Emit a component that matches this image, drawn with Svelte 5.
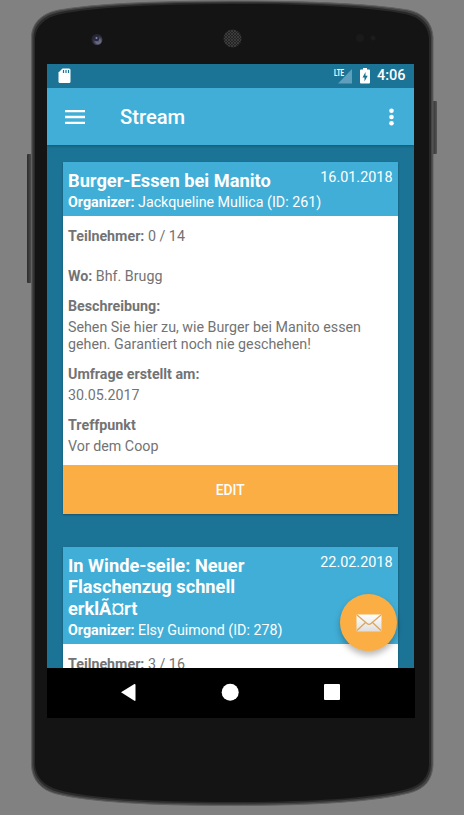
<script>
  const details = [
    { label: 'Beschreibung:', text: 'Sehen Sie hier zu, wie Burger bei Manito essen gehen. Garantiert noch nie geschehen!' },
    { label: 'Umfrage erstellt am:', text: '30.05.2017' },
    { label: 'Treffpunkt', text: 'Vor dem Coop' }
  ];
</script>

<div class="stage">
  <svg class="body" width="464" height="815" viewBox="0 0 464 815" aria-hidden="true">
    <defs>
      <linearGradient id="key" x1="0" x2="1"><stop offset="0" stop-color="#2b2b2b" /><stop offset="1" stop-color="#555" /></linearGradient>
      <pattern id="mesh" width="3" height="3" patternUnits="userSpaceOnUse">
        <rect width="3" height="3" fill="#222" />
        <circle cx="1" cy="1" r=".8" fill="#585858" />
        <circle cx="2.500" cy="2.500" r=".6" fill="#444" />
      </pattern>
      <radialGradient id="lens" cx=".6" cy=".65"><stop offset="0" stop-color="#55556f" /><stop offset=".4" stop-color="#6e6e88" /><stop offset=".7" stop-color="#42425a" /><stop offset="1" stop-color="#26262f" /></radialGradient>
    </defs>
    <rect x="27" y="154" width="5" height="129" rx="1" fill="url(#key)" />
    <rect x="432" y="101" width="5" height="53" rx="1" fill="url(#key)" />
    <path d="M31.500 765V37C32 22 43 13 59 10Q110 1 232 1T408 10C423 13 432 22 433 37V765C432 780 425 789 409 793Q360 805.500 232 805.500T57 794C41 790 32 780 31.500 765Z" fill="#444" stroke="#606060" stroke-width="1" />
    <path d="M33.500 765V37C34 24 44 15 60 12Q112 2.500 232 2.500T406 12C421 15 430 24 431 37V765C430 778 423 787 408 791Q360 803.500 232 803.500T58 792C43 788 34 778 33.500 765Z" fill="#292929" />
    <path d="M35 765V38C36 26 45 17 61 14Q112 4 232 4T405 14C420 17 428 26 429 38V765C428 777 422 785 407 789Q360 802 232 802T59 790C44 786 36 777 35 765Z" fill="#141414" />
    <circle cx="97" cy="39.500" r="5.500" fill="url(#lens)" />
    <circle cx="96.500" cy="38.500" r="2.800" fill="#292940" /><circle cx="96.500" cy="38" r="1" fill="#8a8aa8" />
    <circle cx="232.500" cy="38.500" r="9" fill="url(#mesh)" />
    <circle cx="360" cy="38" r="4" fill="#1a1a1a" /><circle cx="373" cy="38" r="2.500" fill="#1c1c1c" />
  </svg>

  <main class="screen">
    <header class="status">
      <svg class="sd" width="13" height="16" viewBox="0 0 13 16">
        <path d="M4.500.5H11Q12.500.5 12.500 2V13.500Q12.500 15 11 15H2Q.5 15 .5 13.500V4.500Z" fill="#fff" />
        <path d="M5.500 2V5M8 2V5M10.500 2V5" stroke="#1b7496" stroke-width="1.200" />
      </svg>
      <svg class="signal" width="20" height="16" viewBox="0 0 20 16">
        <path d="M5 15.500H19V1Z" fill="#5d9fbc" />
        <text x="1" y="8" textLength="10" lengthAdjust="spacingAndGlyphs" font-family="Roboto, sans-serif" font-size="9" font-weight="700" fill="#fff">LTE</text>
      </svg>
      <svg class="battery" width="10" height="16" viewBox="0 0 10 16">
        <path d="M3 0H7V1.500H9Q10 1.500 10 2.500V14.500Q10 15.500 9 15.500H1Q0 15.500 0 14.500V2.500Q0 1.500 1 1.500H3Z" fill="#fff" />
        <path d="M5.500 4L2.500 9.500H4.500V13.500L7.700 7.800H5.500Z" fill="#1b7496" />
      </svg>
      <span class="time">4:06</span>
    </header>

    <div class="bar">
      <svg width="20" height="14" viewBox="0 0 20 14"><path d="M0 1.200H20M0 7H20M0 12.800H20" stroke="#fff" stroke-width="2.300" /></svg>
      <h1>Stream</h1>
      <svg class="more" width="5" height="18" viewBox="0 0 5 18" fill="#fff"><circle cx="2.500" cy="2.700" r="2.300" /><circle cx="2.500" cy="9" r="2.300" /><circle cx="2.500" cy="15.300" r="2.300" /></svg>
    </div>

    <div class="feed">
      <article>
        <div class="head">
          <div class="row"><h2>Burger-Essen bei Manito</h2><time>16.01.2018</time></div>
          <p class="org"><b>Organizer:</b> Jackqueline Mullica (ID: 261)</p>
        </div>
        <div class="info">
          <p class="count"><b>Teilnehmer:</b> 0 / 14</p>
          <p class="place"><b>Wo:</b> Bhf. Brugg</p>
          {#each details as item}
            <section><b>{item.label}</b><p>{item.text}</p></section>
          {/each}
        </div>
        <button>EDIT</button>
      </article>

      <article class="second">
        <div class="head">
          <div class="row"><h2 class="long">In Winde-seile: Neuer Flaschenzug schnell erklÃ¤rt</h2><time>22.02.2018</time></div>
          <p class="org"><b>Organizer:</b> Elsy Guimond (ID: 278)</p>
        </div>
        <div class="info"><p class="count"><b>Teilnehmer:</b> 3 / 16</p></div>
      </article>

      <div class="fab">
        <svg width="26" height="18" viewBox="0 0 26 18">
          <defs><linearGradient id="paper" x1="0" y1="0" x2="0" y2="1"><stop offset="0" stop-color="#fff" /><stop offset="1" stop-color="#dedede" /></linearGradient></defs>
          <rect x=".5" y=".5" width="25" height="17" rx="1" fill="url(#paper)" />
          <path d="M1 1L11 9.500Q13 11.200 15 9.500L25 1M1 16.500L9.500 8.500M25 16.500L16.500 8.500" fill="none" stroke="#dda65c" stroke-width="1.300" />
        </svg>
      </div>
    </div>

    <nav>
      <svg width="368" height="50" viewBox="0 0 368 50" fill="#fff">
        <path d="M74 24.200L87 16.200Q88.500 15.500 88.500 17V32Q88.500 33.500 87 32.500Z" />
        <circle cx="183.200" cy="24.200" r="8.500" />
        <rect x="277" y="16" width="16" height="16" rx="1" />
      </svg>
    </nav>
  </main>
</div>

<style>
  :global(body) { margin: 0; background: #818181; }
  .stage { position: relative; box-sizing: border-box; width: 464px; height: 815px; padding: 64px 49px 0 47px; background: #818181; overflow: hidden; font-family: Roboto, sans-serif; }
  .body { position: absolute; left: 0; top: 0; }
  svg { display: block; flex: none; }
  h1, h2, p { margin: 0; }
  b { font-weight: 700; }
  .screen { position: relative; width: 368px; height: 654px; display: flex; flex-direction: column; overflow: hidden; }
  .status { width: 367px; height: 24px; flex: none; display: flex; align-items: center; box-sizing: border-box; padding: 0 8px 0 11px; background: #1b7496; color: #fff; }
  .signal { margin-left: auto; }
  .battery { margin-left: 7px; }
  .time { margin-left: 7px; width: 29px; font-size: 14.5px; font-weight: 500; line-height: 24px; white-space: nowrap; }
  .bar { position: relative; width: 367px; height: 57px; flex: none; box-sizing: border-box; display: flex; align-items: center; padding: 0 20px 0 18px; background: #41aed7; box-shadow: 0 1px 3px rgba(0, 0, 0, .25); clip-path: inset(0 0 -6px 0); color: #fff; z-index: 1; }
  h1 { margin: 1px 0 0 35px; font-size: 20.2px; font-weight: 500; line-height: 24px; }
  .more { margin-left: auto; }
  .feed { position: relative; width: 367px; box-sizing: border-box; flex: 1; min-height: 0; overflow: hidden; padding: 17px 16.500px 0 16px; background: #1b7496; }
  article { background: #fff; box-shadow: 0 1px 2px rgba(0, 0, 0, .3); color: #737373; font-size: 14.25px; }
  .head { background: #41aed7; color: #fff; padding: 8px 5px 5px; }
  .row { display: flex; justify-content: space-between; align-items: flex-start; }
  h2 { font-size: 18.25px; font-weight: 700; line-height: 21.5px; white-space: nowrap; }
  .long { width: 195px; white-space: normal; }
  time { line-height: 17px; margin-top: -1px; font-size: 14.4px; }
  .org { line-height: 17px; margin-top: 2px; }
  .info { padding: 12.500px 5px 10px; line-height: 17px; }
  .place { margin-top: 23px; }
  section { margin-top: 13px; }
  section p { margin-top: 4px; }
  button { display: block; width: 100%; height: 49px; padding: 0; border: 0; background: #fbae44; color: #fff; font: 500 13.8px Roboto, sans-serif; }
  .second { margin-top: 32.500px; }
  .second .org { margin-top: 2.500px; }
  .fab { position: absolute; left: 293px; top: 449px; width: 57px; height: 57px; border-radius: 50%; background: #fbae44; display: flex; align-items: center; justify-content: center; box-shadow: 0 4px 6px rgba(0, 0, 0, .28); }
  nav { height: 50px; flex: none; background: #000; }
</style>
